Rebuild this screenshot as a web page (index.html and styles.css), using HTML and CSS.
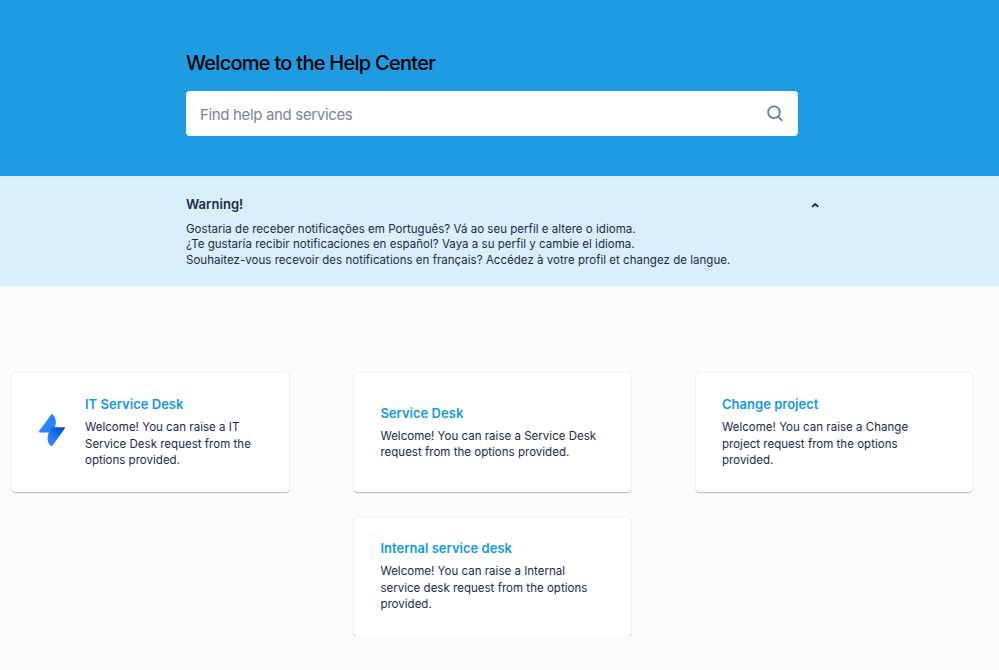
FILE: index.html
```html
<!DOCTYPE html>
<html lang="en">
<head>
    <meta charset="UTF-8">
    <meta name="viewport" content="width=device-width, initial-scale=1.0">
    <title>Help Center</title>
    <link rel="stylesheet" href="styles.css">
</head>
<body>
    <header class="hero">
        <h1>Welcome to the Help Center</h1>
        <div class="search">
            <input class="search-input" type="text" placeholder="Find help and services">
            <svg class="search-icon" width="18" height="18" viewBox="0 0 18 18" fill="none" stroke="#6b778c" stroke-width="1.7" stroke-linecap="round">
                <circle cx="8" cy="7.2" r="5.9"/>
                <path d="M12.2 11.6L15.7 15.3"/>
            </svg>
        </div>
    </header>

    <section class="announcement">
        <div class="announcement-head">
            <h2>Warning!</h2>
            <svg class="chevron" width="8" height="6" viewBox="0 0 8 6" fill="none" stroke="#172b4d" stroke-width="1.8" stroke-linecap="round" stroke-linejoin="round">
                <path d="M1.6 4.4L4.2 2L6.8 4.4"/>
            </svg>
        </div>
        <p>Gostaria de receber notificações em Português? Vá ao seu perfil e altere o idioma.<br>
        ¿Te gustaría recibir notificaciones en español? Vaya a su perfil y cambie el idioma.<br>
        Souhaitez-vous recevoir des notifications en français? Accédez à votre profil et changez de langue.</p>
    </section>

    <hr class="divider">

    <main class="portals">
        <a class="card with-icon">
            <svg class="card-icon" width="28" height="34" viewBox="0 0 28 34">
                <defs>
                    <linearGradient id="bolt" x1="20" y1="13" x2="11" y2="24" gradientUnits="userSpaceOnUse">
                        <stop offset="0" stop-color="#0052cc"/>
                        <stop offset="1" stop-color="#2684ff"/>
                    </linearGradient>
                </defs>
                <path d="M14.4 1.2C18 4.3 18.8 9.5 16.8 14.2L13.2 19.4H1.7C1 19.4 .8 18.7 1.2 18.1L13.4 1.2C13.7.8 14.1.8 14.4 1.2Z" fill="#2684ff"/>
                <path d="M16.2 14.2H26.3C27 14.2 27.2 14.9 26.8 15.5L14.3 32.8C14 33.3 13.5 33.4 13 33C9.2 29.8 8.7 24.4 10.8 19.4C12 17 13.8 14.4 16.2 14.2Z" fill="url(#bolt)"/>
            </svg>
            <div class="card-body">
                <h3>IT Service Desk</h3>
                <p>Welcome! You can raise a IT Service Desk request from the options provided.</p>
            </div>
        </a>
        <a class="card">
            <div class="card-body">
                <h3>Service Desk</h3>
                <p>Welcome! You can raise a Service Desk request from the options provided.</p>
            </div>
        </a>
        <a class="card">
            <div class="card-body narrow">
                <h3>Change project</h3>
                <p>Welcome! You can raise a Change project request from the options provided.</p>
            </div>
        </a>
        <a class="card last">
            <div class="card-body">
                <h3>Internal service desk</h3>
                <p>Welcome! You can raise a Internal service desk request from the options provided.</p>
            </div>
        </a>
    </main>
</body>
</html>
```

FILE: styles.css
```css
* {
    box-sizing: border-box;
}
body {
    margin: 0;
    font-family: Inter, "Liberation Sans", sans-serif;
    background-color: #fafbfd;
    color: #172b4d;
}
h1, h2, h3, p {
    margin: 0;
}
.hero {
    height: 176px;
    padding: 51px 200.6px 0 186px;
    background-color: #1e9be1;
}
.hero h1 {
    font-size: 20px;
    font-weight: 500;
    line-height: 24px;
    letter-spacing: -0.73px;
    color: #000;
}
.search {
    display: flex;
    align-items: center;
    height: 45px;
    margin-top: 16px;
    padding: 0 14px;
    background-color: #fff;
    border-radius: 4px;
}
.search-input {
    flex: 1;
    padding: 1px 0 0;
    border: none;
    outline: none;
    background: none;
    font-family: inherit;
    font-size: 15px;
    letter-spacing: -0.34px;
}
.search-input::placeholder {
    color: #7a869a;
}
.announcement {
    height: 110px;
    padding: 19px 180px 0 186px;
    background-color: #d9effb;
}
.announcement-head {
    display: flex;
    align-items: center;
    justify-content: space-between;
    height: 18px;
}
.chevron {
    margin-top: 2px;
}
.announcement h2 {
    font-size: 13px;
    font-weight: 600;
    letter-spacing: 0.05px;
}
.announcement p {
    margin-top: 8.6px;
    font-size: 11.5px;
    line-height: 15.6px;
    letter-spacing: 0.03px;
    white-space: nowrap;
}
.divider {
    width: 613px;
    height: 2px;
    margin: 39px 0 0 186px;
    border: none;
    background-color: #fdfdfe;
}
.portals {
    display: grid;
    grid-template-columns: repeat(3, 276.6px);
    column-gap: 65px;
    row-gap: 26px;
    margin: 46px 0 0 12.4px;
}
.card {
    display: flex;
    align-items: center;
    height: 119px;
    padding: 0 26px 1px 26.4px;
    background-color: #fff;
    border-radius: 3px;
    box-shadow: 0 1px 1px rgba(9, 30, 66, 0.25), 0 0 1px rgba(9, 30, 66, 0.25);
}
.card.with-icon {
    padding-left: 25.6px;
}
.card.last {
    grid-column: 2;
    height: 118px;
    padding-bottom: 1.6px;
}
.card-icon {
    flex: none;
    margin: 0 19px 4px 0;
}
.card h3 {
    font-size: 13px;
    font-weight: 600;
    line-height: 18px;
    letter-spacing: 0.02px;
    color: #1598e0;
}
.card p {
    margin-top: 6px;
    font-size: 11.5px;
    line-height: 16.5px;
    letter-spacing: 0.02px;
}
.narrow {
    max-width: 200px;
}
```
